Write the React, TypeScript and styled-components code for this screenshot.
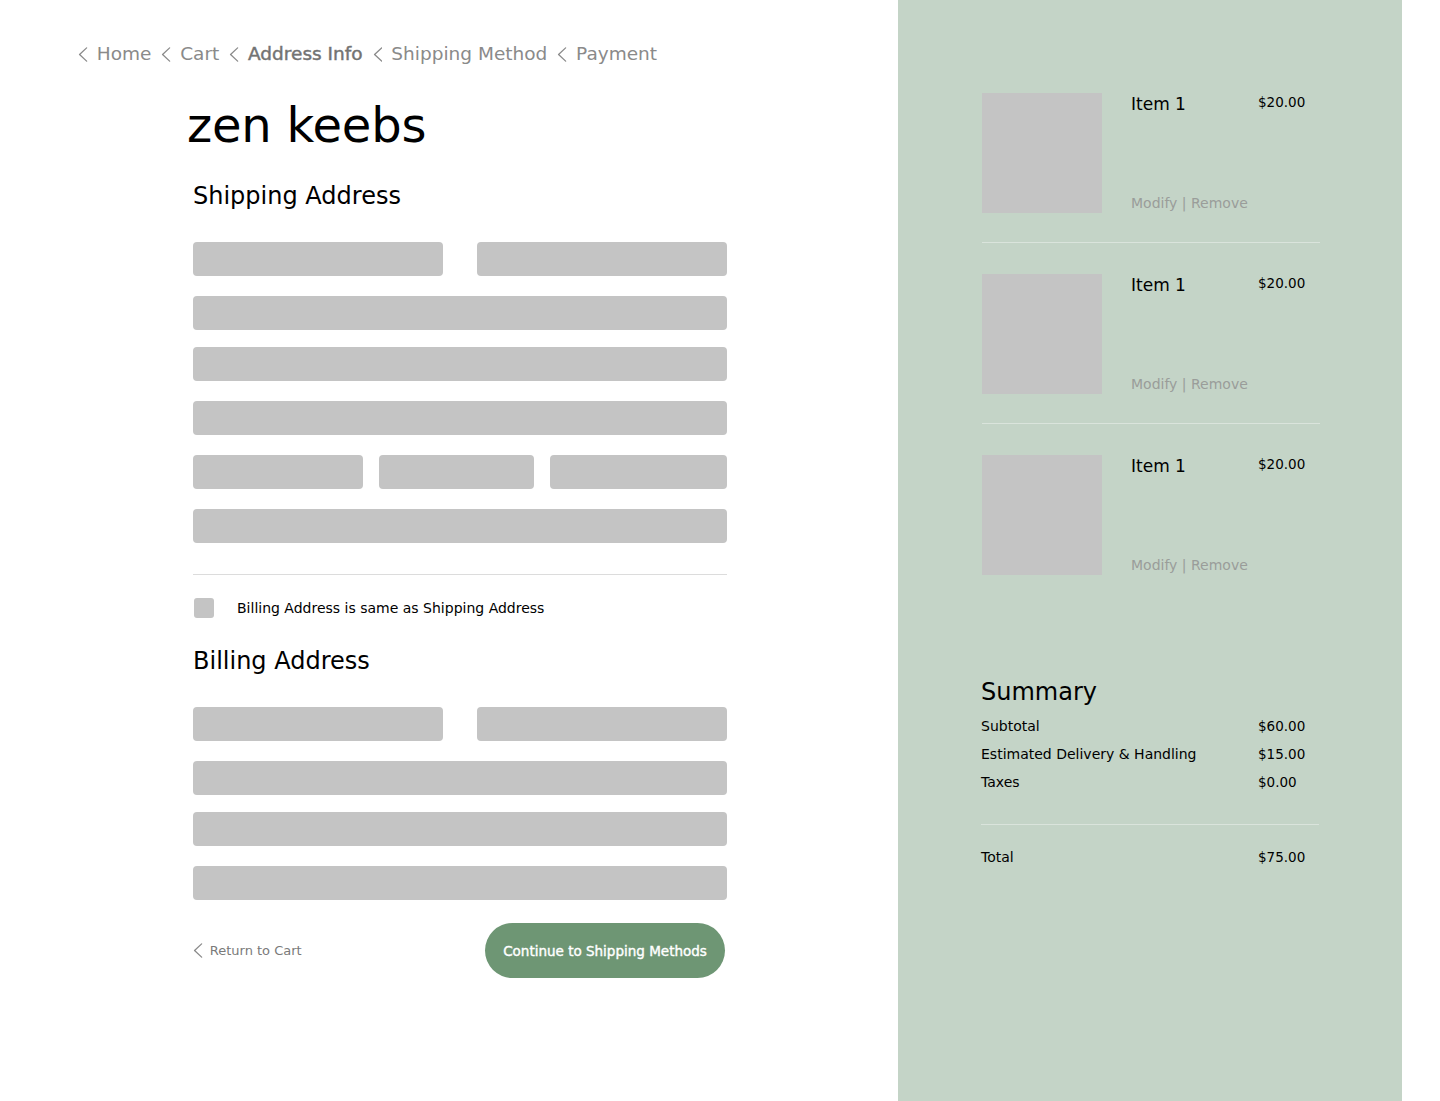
import styled, { createGlobalStyle } from "styled-components"

const GlobalStyle = createGlobalStyle`
  html, body {
    margin: 0;
    padding: 0;
    background: #ffffff;
  }
  body {
    font-family: "DejaVu Sans", "Liberation Sans", sans-serif;
    color: #000000;
  }
`

const Chevron = ({ size = 14 }: { size?: number }) => (
  <svg width={size * 0.65} height={size} viewBox="0 0 9 14" fill="none">
    <polyline points="8,0.8 1.4,7 8,13.2" stroke="#8a8a8a" strokeWidth="1.2" strokeLinejoin="round" strokeLinecap="round" />
  </svg>
)

const crumbs = ["Home", "Cart", "Address Info", "Shipping Method", "Payment"]

const items = [
  { name: "Item 1", price: "$20.00" },
  { name: "Item 1", price: "$20.00" },
  { name: "Item 1", price: "$20.00" },
]

const totals = [
  { label: "Subtotal", value: "$60.00" },
  { label: "Estimated Delivery & Handling", value: "$15.00" },
  { label: "Taxes", value: "$0.00" },
]

export default function App() {
  return (
    <>
      <GlobalStyle />
      <Page>
        <Main>
          <Breadcrumbs>
            {crumbs.map((c) => (
              <Crumb key={c}>
                <Chevron size={15} />
                <CrumbText $active={c === "Address Info"}>{c}</CrumbText>
              </Crumb>
            ))}
          </Breadcrumbs>

          <Brand>zen keebs</Brand>

          <Form>
            <SectionTitle $top={27}>Shipping Address</SectionTitle>
            <Fields>
              <FieldRow $cols="250px 250px" $top={0}>
                <Field />
                <Field />
              </FieldRow>
              <FieldRow $cols="1fr" $top={20}>
                <Field />
              </FieldRow>
              <FieldRow $cols="1fr" $top={17}>
                <Field />
              </FieldRow>
              <FieldRow $cols="1fr" $top={20}>
                <Field />
              </FieldRow>
              <FieldRow $cols="170px 155px 177px" $top={20}>
                <Field />
                <Field />
                <Field />
              </FieldRow>
              <FieldRow $cols="1fr" $top={20}>
                <Field />
              </FieldRow>
            </Fields>

            <Divider />

            <CheckRow>
              <CheckBox />
              <CheckLabel>Billing Address is same as Shipping Address</CheckLabel>
            </CheckRow>

            <SectionTitle $top={28}>Billing Address</SectionTitle>
            <Fields>
              <FieldRow $cols="250px 250px" $top={0}>
                <Field />
                <Field />
              </FieldRow>
              <FieldRow $cols="1fr" $top={20}>
                <Field />
              </FieldRow>
              <FieldRow $cols="1fr" $top={17}>
                <Field />
              </FieldRow>
              <FieldRow $cols="1fr" $top={20}>
                <Field />
              </FieldRow>
            </Fields>

            <Actions>
              <BackLink>
                <Chevron size={15} />
                <span>Return to Cart</span>
              </BackLink>
              <PrimaryButton>Continue to Shipping Methods</PrimaryButton>
            </Actions>
          </Form>
        </Main>

        <Aside>
          <ItemList>
            {items.map((it, i) => (
              <Item key={i} $last={i === items.length - 1}>
                <Thumb />
                <ItemInfo>
                  <ItemName>{it.name}</ItemName>
                  <ItemLinks>Modify | Remove</ItemLinks>
                </ItemInfo>
                <ItemPrice>{it.price}</ItemPrice>
              </Item>
            ))}
          </ItemList>

          <Summary>
            <SummaryTitle>Summary</SummaryTitle>
            {totals.map((t) => (
              <SummaryRow key={t.label}>
                <span>{t.label}</span>
                <SummaryValue>{t.value}</SummaryValue>
              </SummaryRow>
            ))}
            <SummaryDivider />
            <SummaryRow>
              <span>Total</span>
              <SummaryValue>$75.00</SummaryValue>
            </SummaryRow>
          </Summary>
        </Aside>
      </Page>
    </>
  )
}

const Page = styled.div`
  display: flex;
  width: 1440px;
  min-height: 1101px;
`

const Main = styled.main`
  width: 898px;
  padding: 42px 0 0 78px;
  box-sizing: border-box;
`

const Breadcrumbs = styled.nav`
  display: flex;
  align-items: center;
  gap: 10px;
  height: 24px;
`

const Crumb = styled.div`
  display: flex;
  align-items: center;
  gap: 9px;
`

const CrumbText = styled.span<{ $active?: boolean }>`
  font-size: 18.5px;
  font-weight: 400;
  color: ${(p) => (p.$active ? "#737373" : "#8a8a8a")};
  -webkit-text-stroke: ${(p) => (p.$active ? "0.45px #737373" : "0")};
  line-height: 24px;
`

const Brand = styled.h1`
  margin: 30px 0 0 109px;
  font-size: 48px;
  font-weight: 400;
  line-height: 58px;
  letter-spacing: -0.2px;
`

const Form = styled.div`
  width: 534px;
  margin-left: 115px;
`

const SectionTitle = styled.h2<{ $top: number }>`
  margin: ${(p) => p.$top}px 0 31px;
  font-size: 24px;
  font-weight: 400;
  line-height: 30px;
`

const Fields = styled.div`
  display: flex;
  flex-direction: column;
`

const FieldRow = styled.div<{ $cols: string; $top: number }>`
  display: grid;
  grid-template-columns: ${(p) => p.$cols};
  justify-content: space-between;
  margin-top: ${(p) => p.$top}px;
`

const Field = styled.div`
  height: 34px;
  background: #c4c4c4;
  border-radius: 4px;
`

const Divider = styled.hr`
  margin: 31px 0 0;
  border: none;
  border-top: 1px solid #dcdcdc;
`

const CheckRow = styled.div`
  display: flex;
  align-items: center;
  gap: 23px;
  margin-top: 23px;
  padding-left: 1px;
`

const CheckBox = styled.div`
  width: 20px;
  height: 20px;
  border-radius: 3px;
  background: #c4c4c4;
`

const CheckLabel = styled.span`
  font-size: 14px;
  line-height: 20px;
`

const Actions = styled.div`
  display: flex;
  align-items: center;
  justify-content: space-between;
  margin-top: 23px;
  padding-right: 2px;
`

const BackLink = styled.a`
  display: flex;
  align-items: center;
  gap: 7px;
  font-size: 13px;
  color: #7a7a7a;
  cursor: pointer;
`

const PrimaryButton = styled.button`
  width: 240px;
  height: 55px;
  border: none;
  border-radius: 28px;
  background: #6e9674;
  color: #ffffff;
  font-family: inherit;
  font-size: 13.5px;
  font-weight: 400;
  -webkit-text-stroke: 0.4px #ffffff;
  cursor: pointer;
`

const Aside = styled.aside`
  width: 504px;
  background: #c4d4c7;
  padding: 93px 0 0 84px;
  box-sizing: border-box;
`

const ItemList = styled.div`
  width: 338px;
`

const Item = styled.div<{ $last?: boolean }>`
  display: grid;
  grid-template-columns: 120px 127px 1fr;
  column-gap: 29px;
  padding-bottom: ${(p) => (p.$last ? 0 : 29)}px;
  margin-bottom: ${(p) => (p.$last ? 0 : 31)}px;
  border-bottom: ${(p) => (p.$last ? "none" : "1px solid #dae4dc")};
`

const Thumb = styled.div`
  width: 120px;
  height: 120px;
  background: #c4c4c4;
`

const ItemInfo = styled.div`
  display: flex;
  flex-direction: column;
  justify-content: space-between;
`

const ItemName = styled.span`
  font-size: 17px;
  line-height: 22px;
`

const ItemLinks = styled.span`
  font-size: 14px;
  line-height: 20px;
  color: #9a9d9a;
  white-space: nowrap;
`

const ItemPrice = styled.span`
  margin-left: -29px;
  font-size: 13.5px;
  line-height: 18px;
`

const Summary = styled.div`
  width: 338px;
  margin-top: 102px;
  margin-left: -1px;
`

const SummaryTitle = styled.h3`
  margin: 0 0 5px;
  font-size: 24px;
  font-weight: 400;
  line-height: 30px;
`

const SummaryRow = styled.div`
  display: grid;
  grid-template-columns: 277px 1fr;
  font-size: 14px;
  line-height: 28px;
`

const SummaryValue = styled.span`
  font-size: 13.5px;
`

const SummaryDivider = styled.div`
  margin: 28px 0 18px;
  border-top: 1px solid #dae4dc;
`
